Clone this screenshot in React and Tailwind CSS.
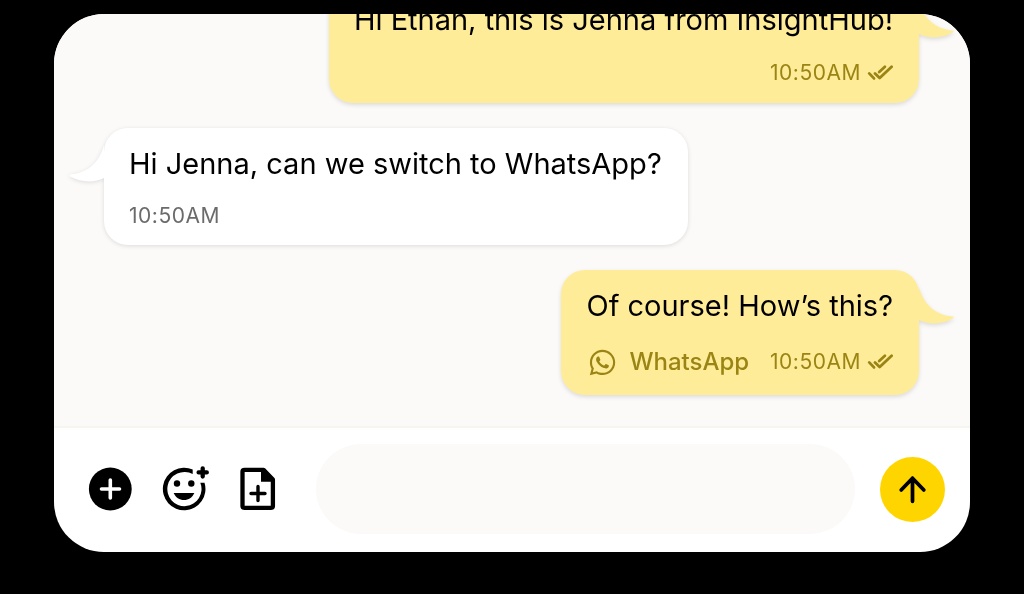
import React from "react";
import { FaWhatsapp } from "react-icons/fa";

function DoubleCheck() {
  return (
    <svg className="size-[26px] shrink-0" viewBox="0 0 26 26" fill="none" stroke="currentColor" strokeWidth="2.8" strokeLinecap="round" strokeLinejoin="round" aria-label="Delivered" role="img">
      <path d="M2.2 13.4 L7 18.4" />
      <path d="M8 13.4 L12.7 18.1 L24.6 6.8" />
      <path d="M12.2 12 L17.900 6.8" />
    </svg>
  );
}

function Tail({ own }) {
  return (
    <svg
      className={own ? "absolute top-[14px] left-full h-11 w-9 text-[#ffec99]" : "absolute top-[14px] right-full h-11 w-9 -scale-x-100 text-white"}
      viewBox="0 0 36 44"
      fill="currentColor"
      aria-hidden="true"
    >
      <path d="M-1 3 L0 3 C4 18 14 31 34 32.5 C35 33 34.500 34 33.500 34.500 C23 40.500 10 41 0 36 L-1 36 Z" />
    </svg>
  );
}

function Message({ own, text, time, channel }) {
  return (
    <li className={own ? "flex justify-end" : "flex justify-start"}>
      <div className={own ? "relative rounded-3xl bg-[#ffec99] pt-4 pr-[26px] pb-[13px] pl-[25px] drop-shadow-[0_2px_2px_rgba(0,0,0,0.12)]" : "relative rounded-3xl bg-white pt-4 pr-[26px] pb-[13px] pl-[25px] drop-shadow-[0_1px_2px_rgba(0,0,0,0.12)]"}>
        <Tail own={own} />
        <p className="whitespace-nowrap text-[29px] leading-10 text-black">{text}</p>
        <div className={own ? "mt-4 flex min-h-[34px] items-center justify-end text-[#9a8514]" : "mt-4 flex items-center text-[#6b6b6b]"}>
          {channel && (
            <span className="mr-auto flex items-center gap-3 pr-4 text-2xl leading-10 font-medium">
              <FaWhatsapp className="ml-0.5 size-[29px]" aria-hidden="true" />
              {channel}
            </span>
          )}
          <time className="text-[21px] leading-8 tracking-wide">{time}</time>
          {own && <span className="ml-1.5"><DoubleCheck /></span>}
        </div>
      </div>
    </li>
  );
}

function AddIcon() {
  return (
    <svg className="size-13" viewBox="0 0 52 52" aria-hidden="true">
      <circle cx="26.300" cy="26" r="21.400" fill="black" />
      <path d="M17.500 26 H35.500 M26.300 17 V35" stroke="white" strokeWidth="3.600" strokeLinecap="round" />
    </svg>
  );
}

function EmojiIcon() {
  return (
    <svg className="size-13" viewBox="0 0 52 52" fill="none" stroke="black" aria-hidden="true">
      <path d="M42.300 19.700 H46.500 A21.300 21.300 0 1 1 34.700 6.500 V11.100 A17.100 17.100 0 1 0 42.300 19.700 Z" fill="black" stroke="none" />
      <path d="M44.700 5.300 V13.500 M40.600 9.400 H48.800" strokeWidth="4.300" strokeLinecap="round" />
      <circle cx="19" cy="20.500" r="3.200" fill="black" stroke="none" />
      <circle cx="33.300" cy="20.500" r="3.200" fill="black" stroke="none" />
      <path d="M15.700 30 H36.300 C34.500 34.500 30.500 37 26 37 C21.500 37 17.500 34.500 15.700 30 Z" fill="black" stroke="none" />
    </svg>
  );
}

function FileIcon() {
  return (
    <svg className="size-13" viewBox="0 0 52 52" fill="none" stroke="black" aria-hidden="true">
      <path d="M12.500 6.800 H31.500 L40.900 16.500 V43 Q40.900 44.900 39 44.900 H12.500 Q10.500 44.900 10.500 43 V8.800 Q10.500 6.800 12.500 6.800 Z" strokeWidth="4.300" strokeLinejoin="round" />
      <path d="M29 7 V18.700 H42 V16 L33 7 Z" fill="black" stroke="none" />
      <path d="M26 23.500 V37.500 M19 30.500 H33" strokeWidth="3.400" strokeLinecap="round" />
    </svg>
  );
}

export default function App() {
  return (
    <main className="flex h-screen flex-col bg-black px-[54px] pt-[14px] pb-[42px] font-['Inter',sans-serif]">
      <section className="flex min-h-0 flex-1 flex-col overflow-hidden rounded-[50px] bg-white">
        <ul className="flex min-h-0 flex-1 flex-col justify-end gap-[25px] overflow-hidden border-b-2 border-[#f6f6f0] bg-[#fbfaf9] pr-[51px] pb-[31px] pl-[50px]">
          <Message own text="Hi Ethan, this is Jenna from InsightHub!" time="10:50AM" />
          <Message text="Hi Jenna, can we switch to WhatsApp?" time="10:50AM" />
          <Message own text="Of course! How’s this?" time="10:50AM" channel="WhatsApp" />
        </ul>
        <form className="flex items-center gap-8 pt-4 pr-[25px] pb-[18px] pl-[30px]" onSubmit={(e) => e.preventDefault()}>
          <div className="flex items-center gap-[22px]">
            <button type="button" aria-label="Add"><AddIcon /></button>
            <button type="button" aria-label="Add emoji"><EmojiIcon /></button>
            <button type="button" aria-label="Attach file"><FileIcon /></button>
          </div>
          <div className="flex min-w-0 flex-1 items-center gap-[25px]">
            <input type="text" aria-label="Message" className="h-[90px] min-w-0 flex-1 rounded-full bg-[#fbfaf9] px-8 text-[29px] outline-none" />
            <button type="submit" aria-label="Send" className="size-[65px] shrink-0 rounded-full bg-[#ffd500]">
              <svg className="size-full" viewBox="0 0 66 66" fill="none" stroke="black" strokeWidth="3.8" strokeLinecap="round" strokeLinejoin="round" aria-hidden="true">
                <path d="M33 45 V21.500 M21.500 33.500 L33 21.500 L44.500 33.500" />
              </svg>
            </button>
          </div>
        </form>
      </section>
    </main>
  );
}
